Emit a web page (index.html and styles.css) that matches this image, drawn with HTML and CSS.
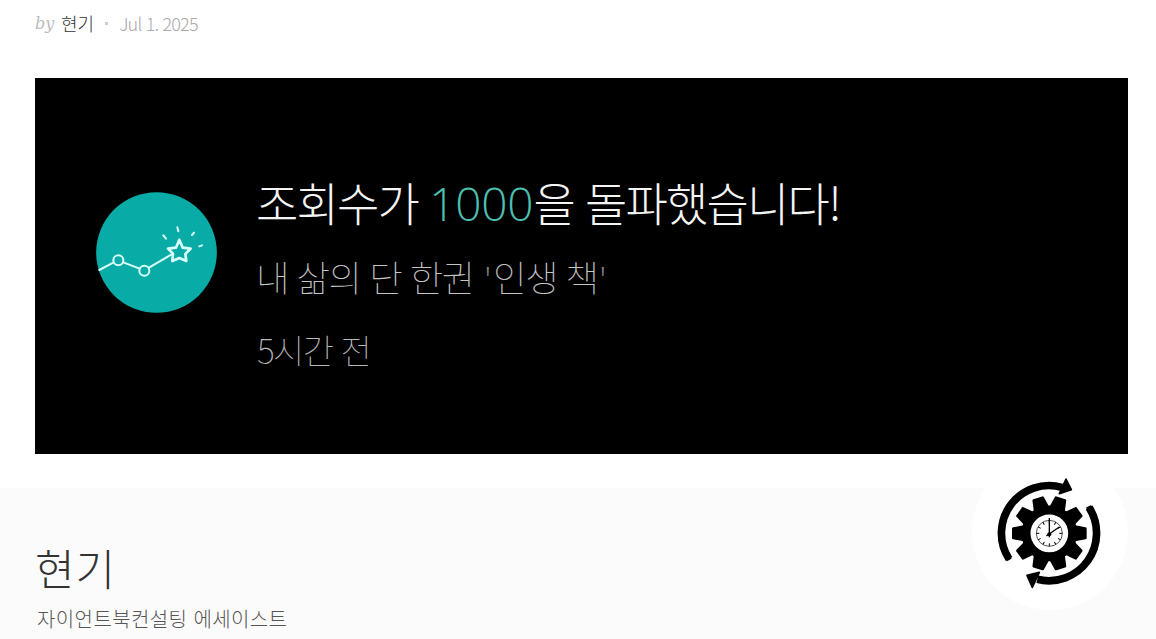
FILE: index.html
```html
<!DOCTYPE html>
<html lang="ko">
<head>
  <meta charset="UTF-8">
  <meta name="viewport" content="width=device-width, initial-scale=1">
  <title>현기</title>
  <link rel="stylesheet" href="styles.css">
</head>
<body>
  <div class="article">
    <div class="byline">
      <span class="by">by</span>
      <a class="writer">현기</a>
      <span class="dot"></span>
      <span class="date">Jul 1. 2025</span>
    </div>

    <!-- 조회수 알림 -->
    <div class="notice">
      <svg class="notice-icon" viewBox="48 35 363 363">
        <circle cx="229.500" cy="216.500" r="181" fill="#09aba7"/>
        <g fill="none" stroke="#d8fffb" stroke-width="6" stroke-linecap="round" stroke-linejoin="round">
          <path d="M58 269L101 246M130 246L179 265M207 262L275 222"/>
          <circle cx="115" cy="240" r="15"/>
          <circle cx="193" cy="271" r="15"/>
          <path stroke-width="8" d="M298 178L308 202L332 205L316 221L319 242L298 233L277 242L279 220L264 205L288 202Z"/>
          <path d="M250 165L258 175M292 141L295 153M342 157L336 164M358 198L366 195"/>
        </g>
      </svg>
      <div class="notice-text">
        <p class="notice-title">조회수가 <span class="count">1000</span>을 돌파했습니다!</p>
        <p class="notice-book">내 삶의 단 한권 <span class="quote">'</span>인생 책<span class="quote">'</span></p>
        <p class="notice-time">5시간 전</p>
      </div>
    </div>
  </div>

  <!-- 작가 소개 -->
  <div class="author">
    <div class="author-info">
      <h2>현기</h2>
      <p>자이언트북컨설팅 에세이스트</p>
    </div>
    <div class="avatar">
      <svg viewBox="36 27 468 468">
        <g fill="none" stroke="#000" stroke-width="23">
          <path d="M147 342A143 143 0 0 1 306 127"/>
          <path d="M387 187A143 143 0 0 1 232 403"/>
        </g>
        <g fill="none" stroke="#000" stroke-width="8" stroke-linejoin="round">
          <path d="M139 345L153 338M380 191L394 184"/>
        </g>
        <g stroke="#000" stroke-width="5" stroke-linejoin="round">
          <path d="M318 102L334 134L298 146Z"/>
          <path d="M201 391L238 382L217 427Z"/>
        </g>
        <g transform="translate(268 265)">
          <circle r="70" fill="none" stroke="#000" stroke-width="27"/>
          <g stroke="#000" stroke-width="8" stroke-linejoin="round">
            <path id="tooth" d="M76 -20L108 -14V14L76 20Z"/>
            <use href="#tooth" transform="rotate(36)"/>
            <use href="#tooth" transform="rotate(72)"/>
            <use href="#tooth" transform="rotate(108)"/>
            <use href="#tooth" transform="rotate(144)"/>
            <use href="#tooth" transform="rotate(180)"/>
            <use href="#tooth" transform="rotate(216)"/>
            <use href="#tooth" transform="rotate(252)"/>
            <use href="#tooth" transform="rotate(288)"/>
            <use href="#tooth" transform="rotate(324)"/>
          </g>
          <circle r="39" fill="none" stroke="#000" stroke-width="2"/>
          <g stroke="#000" stroke-width="3">
            <path id="ticks" d="M0 -39V-30M0 39V30M-39 0H-30M39 0H30"/>
            <use href="#ticks" transform="rotate(30)"/>
            <use href="#ticks" transform="rotate(60)"/>
            <path d="M0 12V-46" stroke-width="4"/>
            <path d="M-9 8L30 -19" stroke-width="4"/>
          </g>
          <circle cy="3" r="6"/>
        </g>
      </svg>
    </div>
  </div>
</body>
</html>
```

FILE: styles.css
```css
body {
  margin: 0;
  background: #fff;
  font-family: "Noto Sans CJK KR", sans-serif;
  font-weight: 300;
  overflow: hidden;
}
p, h2 {
  margin: 0;
  white-space: nowrap;
}
.article {
  padding: 0 28px 34px 35px;
}
.byline {
  display: flex;
  align-items: center;
  height: 46px;
  margin-bottom: 32px;
  font-size: 18px;
  line-height: 46px;
  color: #aaa;
}
.by {
  width: 26px;
  padding-top: 2px;
  font-family: "DejaVu Serif", serif;
  font-style: italic;
  font-weight: 400;
  font-size: 16px;
  color: #bbb;
}
.writer {
  color: #333;
}
.dot {
  width: 3px;
  height: 3px;
  margin: 0 11px 0 11px;
  background: #ccc;
}
.date {
  letter-spacing: -0.8px;
}
.notice {
  display: flex;
  height: 376px;
  background: #000;
}
.notice-icon {
  width: 121px;
  height: 121px;
  margin: 113.5px 39px 0 61px;
}
.notice-text {
  padding-top: 85px;
}
.notice-title {
  height: 77px;
  line-height: 76px;
  font-size: 46px;
  letter-spacing: -1.8px;
  color: #f4f4f4;
}
.count {
  font-family: "Open Sans", sans-serif;
  letter-spacing: -0.2px;
  color: #4dbfae;
}
.notice-book {
  height: 74px;
  line-height: 74px;
  font-size: 36.5px;
  font-weight: 100;
  letter-spacing: -1.6px;
  color: #c4c4c4;
}
.quote {
  margin-left: 2px;
  font-family: "Open Sans", sans-serif;
  font-weight: 300;
  font-size: 34px;
  letter-spacing: 2px;
  color: #888;
}
.notice-time {
  height: 72px;
  line-height: 72px;
  padding-left: 1px;
  font-size: 34px;
  font-weight: 100;
  letter-spacing: -1.6px;
  color: #b8b8b8;
}
.author {
  display: flex;
  justify-content: space-between;
  height: 151px;
  padding: 0 28px 0 35px;
  background: #fbfbfb;
}
.author-info {
  padding-top: 47px;
}
.author h2 {
  height: 66px;
  line-height: 64px;
  font-size: 43px;
  font-weight: 300;
  letter-spacing: 1px;
  color: #333;
}
.author p {
  padding-left: 2px;
  line-height: 36px;
  font-size: 20px;
  letter-spacing: 0.4px;
  color: #555;
}
.avatar {
  width: 156px;
  height: 156px;
  margin-top: -34px;
  border-radius: 50%;
  background: #fff;
}
.avatar svg {
  display: block;
}
```
